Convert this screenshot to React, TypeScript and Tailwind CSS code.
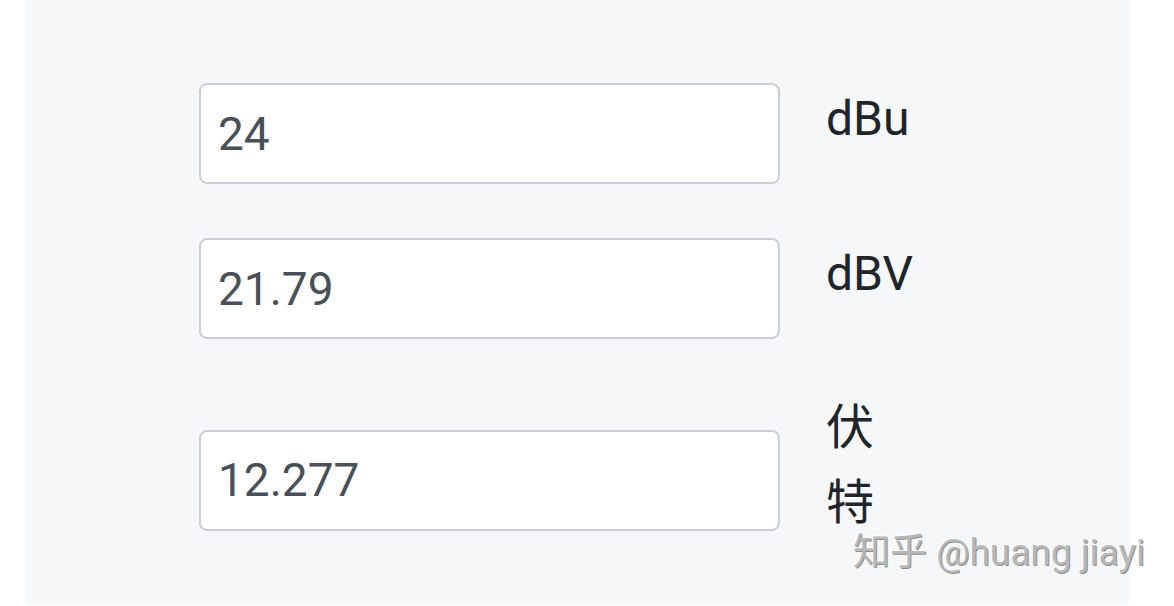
const rows = [
  { value: '24', unit: 'dBu' },
  { value: '21.79', unit: 'dBV' },
  { value: '12.277', unit: '伏特' },
];

export default function App() {
  return (
    <div
      className="relative w-full h-[606px] bg-white overflow-hidden"
      style={{ fontFamily: 'Roboto, "Noto Sans CJK SC", sans-serif' }}
    >
      <div className="ml-[26px] w-[1103px] h-[605px] bg-[#f6f7f9] pt-[83px] pl-[173px]">
        <div className="flex flex-col gap-[54px]">
          {rows.map((row) => (
            <div key={row.unit} className="flex items-center gap-[46px]">
              <input
                readOnly
                value={row.value}
                className="w-[581px] h-[101px] shrink-0 rounded-[8px] border-2 border-[#cbcfd4] bg-white pl-[17px] text-[46px] text-[#495057] outline-none"
              />
              <div className="w-[90px] -mt-[3px] mb-[27px] text-[48px] leading-[75px] text-[#212529] break-all">
                {row.unit}
              </div>
            </div>
          ))}
        </div>
      </div>

      {/* watermark */}
      <div
        className="absolute left-[853px] top-[528px] text-[37px] leading-[50px] text-[#b8b8b8] whitespace-nowrap"
        style={{ textShadow: '1px 1px 0 #909090, -1px -1px 0 #ffffff' }}
      >
        知乎 @huang jiayi
      </div>
    </div>
  );
}
